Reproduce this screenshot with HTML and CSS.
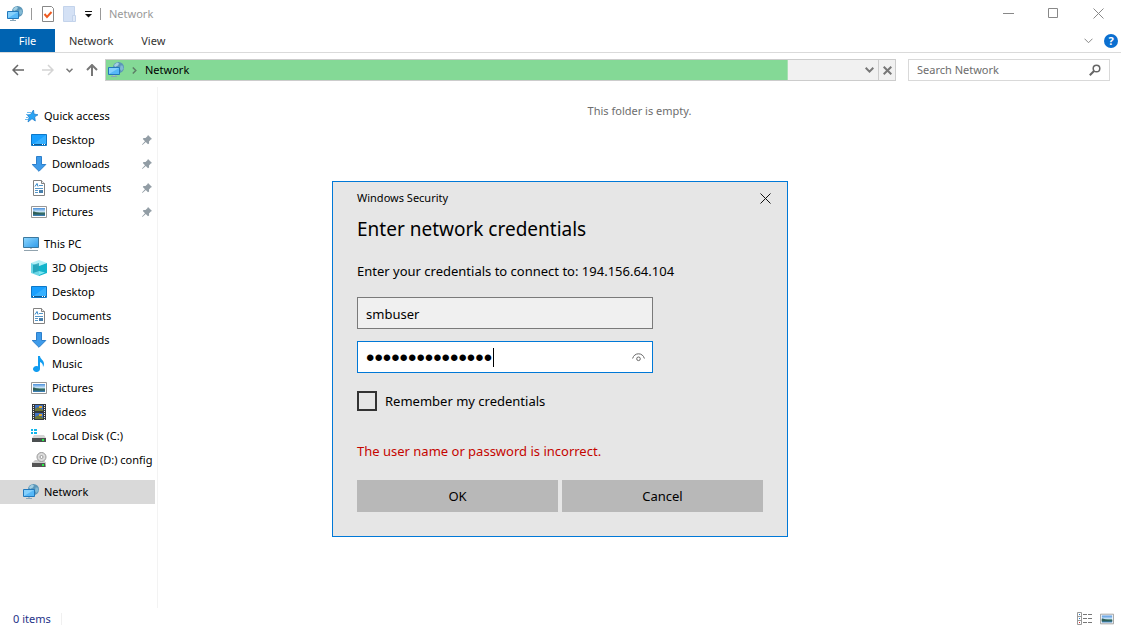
FILE: index.html
```html
<!DOCTYPE html>
<html lang="en">
<head>
    <meta charset="UTF-8">
    <meta name="viewport" content="width=device-width, initial-scale=1.0">
    <title>Network</title>
    <link rel="stylesheet" href="styles.css">
</head>
<body>

    <!-- Shared icons -->
    <svg class="icon-defs" aria-hidden="true">
        <defs>
            <linearGradient id="screenFill" x1="0" y1="0" x2="1" y2="1">
                <stop offset="0" stop-color="#8fd8ff"/>
                <stop offset="1" stop-color="#2f9bea"/>
            </linearGradient>
            <linearGradient id="skyFill" x1="0" y1="0" x2="0" y2="1">
                <stop offset="0" stop-color="#4a90dc"/>
                <stop offset="0.5" stop-color="#d4eafa"/>
                <stop offset="0.6" stop-color="#3c7868"/>
                <stop offset="1" stop-color="#3b7fc0"/>
            </linearGradient>
            <linearGradient id="driveFill" x1="0" y1="0" x2="0" y2="1">
                <stop offset="0" stop-color="#d4d4d4"/>
                <stop offset="1" stop-color="#8e8e8e"/>
            </linearGradient>
        </defs>
        <symbol id="i-network" viewBox="0 0 16 16">
            <circle cx="10.500" cy="5.500" r="5.500" fill="#5b96b8"/>
            <path d="M6 3l3-2.500 2 1-1 2L7 5z" fill="#a3cfe2"/>
            <path d="M12.500 3.500l2 0 1 3-2 2.500-1.500-2z" fill="#82b9d4"/>
            <path d="M.5 5.500h11v7H.500z" fill="#56b8f8" stroke="#2278bb"/>
            <path d="M1 6h10L1 12z" fill="#85d0fc"/>
            <path d="M5 13h2v1H5z" fill="#a9bac5"/>
            <path d="M3 14.500h6" stroke="#8aa7b9"/>
        </symbol>
        <symbol id="i-star" viewBox="0 0 16 16">
            <path d="M10.500 2l.5 4 4 .8-3.300 2 .6 4.200-3.300-2.300L5 14l1-4.500L4.500 7l3-.5z" fill="#2aa4f4" stroke="#1878c8" stroke-width=".7"/>
            <path d="M4 4.500h4M3 6.500h3M3 9.500h2M2 11.500h3" stroke="#6bb9ee"/>
        </symbol>
        <symbol id="i-desktop" viewBox="0 0 16 16">
            <path d="M.5 2.500h15v11H.500z" fill="#19a0ff" stroke="#0d78c8"/>
            <path d="M1 13L15 3v10z" fill="#36b0ff"/>
            <path d="M1 12.500h14" stroke="#10588f"/>
            <path d="M2 12.500h1M11 12.500h1M13 12.500h1" stroke="#fff"/>
        </symbol>
        <symbol id="i-download" viewBox="0 0 16 16">
            <path d="M5.500.5h5v8h4.300L8 15.300 1.200 8.500h4.300z" fill="#3e9bea" stroke="#2d7fcb"/>
        </symbol>
        <symbol id="i-document" viewBox="0 0 16 16">
            <path d="M2.500.5h8l3 3v12h-11z" fill="#fff" stroke="#828282"/>
            <path d="M10.500.5v3h3" fill="#eee" stroke="#828282"/>
            <path d="M4 6.500l2-3 1 3" fill="none" stroke="#2a82c6"/>
            <path d="M8 5.500h4M4 8.500h8M4 10.500h3M4 12.500h3" stroke="#5697c8"/>
            <path d="M8 10h4v3H8z" fill="#477fac"/>
        </symbol>
        <symbol id="i-picture" viewBox="0 0 16 16">
            <path d="M.5 2.500h15v11H.500z" fill="#fff" stroke="#979797"/>
            <path d="M2 4h12v8H2z" fill="url(#skyFill)"/>
            <path d="M2 7.500c3 0 4 2 12 2v1H2z" fill="#305f58"/>
        </symbol>
        <symbol id="i-pc" viewBox="0 0 16 16">
            <path d="M.5 1.500h15v10H.500z" fill="url(#screenFill)" stroke="#3c789e"/>
            <path d="M7 12h2v1H7z" fill="#b8c4cc"/>
            <path d="M1 14.500h14" stroke="#91a3ae"/>
        </symbol>
        <symbol id="i-cube" viewBox="0 0 16 16">
            <path d="M0 3l8-3 8 3-8 3z" fill="#b4f1f7"/>
            <path d="M0 3l8 3v10l-8-3z" fill="#6ad6e6"/>
            <path d="M16 3L8 6v10l8-3z" fill="#12b4cc"/>
            <path d="M2 5l6-2v8l-6 2z" fill="#0a93ab" opacity=".7"/>
            <path d="M8 11l6 1.500-6 2.500z" fill="#7fe6f2"/>
        </symbol>
        <symbol id="i-music" viewBox="0 0 16 16">
            <path d="M7 0h2c0 3 4 4 4 8 0 1-.4 2-1 3 0-3-1-4-3-5v7a3.500 3 0 1 1-2-2.700z" fill="#119cf0"/>
        </symbol>
        <symbol id="i-video" viewBox="0 0 16 16">
            <path d="M1 0h14v16H1z" fill="#34383c"/>
            <path d="M4 1h8v6H4zM4 9h8v6H4z" fill="#3f71c4"/>
            <path d="M4 5l3-2 5 3v1H4zM4 13l4-2 4 3v1H4z" fill="#6b7637"/>
            <path d="M8 2h3v2H8zM8 10h3v2H8z" fill="#e3a92d"/>
            <path d="M2.500 1v15M13.500 1v15" stroke="#eee" stroke-dasharray="1 1"/>
        </symbol>
        <symbol id="i-disk" viewBox="0 0 16 16">
            <path d="M0 1h2v2H0zM3 1h3v2H3zM0 4h2v2H0zM3 4h3v2H3z" fill="#12b6ea"/>
            <path d="M3 7h10l2 3H1z" fill="#d5d5d5"/>
            <path d="M1 10h14v4H1z" fill="#4b4f50"/>
            <path d="M11 11h2v2h-2z" fill="#28ee45"/>
        </symbol>
        <symbol id="i-cd" viewBox="0 0 16 16">
            <path d="M4 8h9l2 3H1z" fill="#c9c9c9"/>
            <circle cx="10.500" cy="5" r="4.500" fill="#dcdcdc" stroke="#999"/>
            <circle cx="10.500" cy="5" r="1.500" fill="#fff" stroke="#999"/>
            <path d="M1 10h14v5H1z" fill="url(#driveFill)"/>
            <path d="M1 11h13v4H1z" fill="#555"/>
            <path d="M11 12h2v2h-2z" fill="#28ee45"/>
        </symbol>
        <symbol id="i-pin" viewBox="0 0 10 10">
            <path d="M6 0l4 4-1.200.6-1.800 1.900.1 2-1.100.7L3.800 7 .4 9.900 0 9.500 3 6.200.8 4l.7-1.100 2 .1L5.400 1.200z" fill="#929da5"/>
        </symbol>
        <symbol id="i-details" viewBox="0 0 16 14">
            <path d="M.5.500h4v12h-4zM.5 4.500h4M.5 8.500h4" fill="#fff" stroke="#999"/>
            <path d="M2 2h1v1H2zM2 6h1v1H2z" fill="#2c7fc7"/>
            <path d="M2 10h1v1H2z" fill="#d22"/>
            <path d="M6 2.500h4M11 2.500h4M6 6.500h4M11 6.500h4M6 10.500h4M11 10.500h4" stroke="#777"/>
        </symbol>
    </svg>

    <div class="window">

        <!-- Title Bar -->
        <header class="title-bar">
            <svg class="icon"><use href="#i-network"/></svg>
            <span class="divider"></span>
            <div class="quick-tools">
                <button aria-label="Properties">
                    <svg width="12" height="16" viewBox="0 0 12 16"><path d="M.5.500h9l2 2v13H.500z" fill="#fff" stroke="#888"/><path d="M2.500 8l2.500 3 4.500-5" fill="none" stroke="#ee5a20" stroke-width="2"/></svg>
                </button>
                <button aria-label="New folder">
                    <svg width="13" height="16" viewBox="0 0 13 16"><path d="M.5.500h11v15H.500z" fill="#d4e1f5" stroke="#c3d3eb"/><path d="M9.500 9.500h3v6h-3z" fill="#dfe9f8" stroke="#c3d3eb"/></svg>
                </button>
                <button aria-label="Customize toolbar">
                    <svg width="7" height="8" viewBox="0 0 7 8"><path d="M0 1.500h7" stroke="#111"/><path d="M0 4h7L3.500 7.500z" fill="#111"/></svg>
                </button>
            </div>
            <span class="divider"></span>
            <h1 class="window-title">Network</h1>
            <div class="window-controls">
                <button aria-label="Minimize"><svg width="11" height="11" viewBox="0 0 11 11"><path d="M0 5.500h11" stroke="#888"/></svg></button>
                <button aria-label="Maximize"><svg width="11" height="11" viewBox="0 0 11 11"><path d="M.5.500h9v9h-9z" fill="none" stroke="#888"/></svg></button>
                <button aria-label="Close"><svg width="11" height="11" viewBox="0 0 11 11"><path d="M.5.500l10 10M10.500.5l-10 10" stroke="#888"/></svg></button>
            </div>
        </header>

        <!-- Ribbon Tabs -->
        <nav class="ribbon">
            <button class="tab tab-file">File</button>
            <button class="tab">Network</button>
            <button class="tab">View</button>
            <div class="ribbon-end">
                <button aria-label="Expand the ribbon"><svg width="9" height="6" viewBox="0 0 9 6"><path d="M.5.700l4 4 4-4" fill="none" stroke="#888"/></svg></button>
                <button class="help" aria-label="Help">?</button>
            </div>
        </nav>

        <!-- Address Row -->
        <div class="address-row">
            <div class="history">
                <button aria-label="Back"><svg width="12" height="12" viewBox="0 0 12 12"><path d="M12 6H1M6 1L1 6l5 5" fill="none" stroke="#666" stroke-width="1.500"/></svg></button>
                <button class="forward" aria-label="Forward"><svg width="12" height="12" viewBox="0 0 12 12"><path d="M0 6h11M6 1l5 5-5 5" fill="none" stroke="#d4d4d4" stroke-width="1.500"/></svg></button>
                <button aria-label="Recent locations"><svg width="7" height="5" viewBox="0 0 7 5"><path d="M.5.800l3 3 3-3" fill="none" stroke="#777" stroke-width="1.500"/></svg></button>
                <button aria-label="Up"><svg width="12" height="12" viewBox="0 0 12 12"><path d="M6 12V1M1 6l5-5 5 5" fill="none" stroke="#777" stroke-width="2"/></svg></button>
            </div>
            <div class="address">
                <div class="crumbs">
                    <svg class="icon"><use href="#i-network"/></svg>
                    <svg width="5" height="7" viewBox="0 0 5 7"><path d="M.8.500l3 3-3 3" fill="none" stroke="#5d8067" stroke-width="1.500"/></svg>
                    <a href="#">Network</a>
                </div>
                <button class="address-drop" aria-label="Previous locations"><svg width="9" height="6" viewBox="0 0 9 6"><path d="M.7.800l3.800 3.800L8.300.8" fill="none" stroke="#777" stroke-width="2"/></svg></button>
                <button class="address-stop" aria-label="Stop loading"><svg width="9" height="9" viewBox="0 0 9 9"><path d="M.7.700l7.600 7.600M8.300.700L.7 8.300" stroke="#777" stroke-width="2"/></svg></button>
            </div>
            <div class="search">
                <input type="text" placeholder="Search Network" aria-label="Search Network">
                <svg width="12" height="12" viewBox="0 0 12 12"><circle cx="7.500" cy="4.500" r="3.300" fill="none" stroke="#666" stroke-width="1.500"/><path d="M5 7L.8 11.200" stroke="#666" stroke-width="2"/></svg>
            </div>
        </div>

        <div class="main">
            <!-- Navigation Pane -->
            <aside class="sidebar">
                <ul class="tree">
                    <li><a class="root" href="#"><svg class="icon"><use href="#i-star"/></svg><span>Quick access</span></a></li>
                    <li><a href="#"><svg class="icon"><use href="#i-desktop"/></svg><span>Desktop</span><svg class="pin"><use href="#i-pin"/></svg></a></li>
                    <li><a href="#"><svg class="icon"><use href="#i-download"/></svg><span>Downloads</span><svg class="pin"><use href="#i-pin"/></svg></a></li>
                    <li><a href="#"><svg class="icon"><use href="#i-document"/></svg><span>Documents</span><svg class="pin"><use href="#i-pin"/></svg></a></li>
                    <li><a href="#"><svg class="icon"><use href="#i-picture"/></svg><span>Pictures</span><svg class="pin"><use href="#i-pin"/></svg></a></li>
                </ul>
                <ul class="tree">
                    <li><a class="root" href="#"><svg class="icon"><use href="#i-pc"/></svg><span>This PC</span></a></li>
                    <li><a href="#"><svg class="icon"><use href="#i-cube"/></svg><span>3D Objects</span></a></li>
                    <li><a href="#"><svg class="icon"><use href="#i-desktop"/></svg><span>Desktop</span></a></li>
                    <li><a href="#"><svg class="icon"><use href="#i-document"/></svg><span>Documents</span></a></li>
                    <li><a href="#"><svg class="icon"><use href="#i-download"/></svg><span>Downloads</span></a></li>
                    <li><a href="#"><svg class="icon"><use href="#i-music"/></svg><span>Music</span></a></li>
                    <li><a href="#"><svg class="icon"><use href="#i-picture"/></svg><span>Pictures</span></a></li>
                    <li><a href="#"><svg class="icon"><use href="#i-video"/></svg><span>Videos</span></a></li>
                    <li><a href="#"><svg class="icon"><use href="#i-disk"/></svg><span>Local Disk (C:)</span></a></li>
                    <li><a href="#"><svg class="icon"><use href="#i-cd"/></svg><span>CD Drive (D:) config</span></a></li>
                </ul>
                <ul class="tree">
                    <li><a class="root selected" href="#"><svg class="icon"><use href="#i-network"/></svg><span>Network</span></a></li>
                </ul>
            </aside>

            <main class="content">
                <p class="empty">This folder is empty.</p>
            </main>
        </div>

        <!-- Status Bar -->
        <footer class="status-bar">
            <span class="status-count">0 items</span>
            <div class="view-buttons">
                <button aria-label="Details view"><svg width="16" height="14"><use href="#i-details"/></svg></button>
                <button aria-label="Large icons view"><svg width="14" height="14"><use href="#i-picture"/></svg></button>
            </div>
        </footer>
    </div>

    <!-- Credentials Dialog -->
    <form class="dialog" role="dialog" aria-labelledby="dialogTitle">
        <div class="dialog-bar">
            <span>Windows Security</span>
            <button type="button" aria-label="Close"><svg width="11" height="11" viewBox="0 0 11 11"><path d="M.5.500l10 10M10.500.5l-10 10" stroke="#111"/></svg></button>
        </div>
        <h2 id="dialogTitle">Enter network credentials</h2>
        <p class="dialog-text">Enter your credentials to connect to: 194.156.64.104</p>

        <input class="field" type="text" name="username" value="smbuser" aria-label="User name">
        <div class="password">
            <input class="field" type="password" name="password" value="aaaaaaaaaaaaaaa" aria-label="Password">
            <span class="caret"></span>
            <button class="reveal" type="button" aria-label="Show password"><svg width="13" height="9" viewBox="0 0 13 9"><path d="M.6 5.500C1.500 2.600 3.500.8 6.500.8s5 1.800 5.900 4.700" fill="none" stroke="#666"/><circle cx="6.500" cy="5.800" r="1.800" fill="none" stroke="#666"/></svg></button>
        </div>

        <label class="remember"><input type="checkbox" name="remember"> Remember my credentials</label>
        <p class="error-message">The user name or password is incorrect.</p>

        <div class="dialog-buttons">
            <button type="button">OK</button>
            <button type="button">Cancel</button>
        </div>
    </form>

</body>
</html>
```
FILE: styles.css
```css
/* Common Styles */
* {
    box-sizing: border-box;
}

body {
    margin: 0;
    font-family: 'Noto Sans', 'Open Sans', sans-serif;
    font-size: 11px;
    line-height: 16px;
    color: #000;
    background-color: #fff;
}

button {
    display: flex;
    align-items: center;
    justify-content: center;
    padding: 0;
    border: none;
    background: none;
    font: inherit;
    color: inherit;
}

input {
    font: inherit;
    color: inherit;
    outline: none;
}

a {
    color: inherit;
    text-decoration: none;
}

h1, h2, p, ul {
    margin: 0;
    padding: 0;
    font-weight: normal;
}

.icon-defs {
    position: absolute;
    width: 0;
    height: 0;
}

.icon {
    flex: none;
    width: 16px;
    height: 16px;
}

.window {
    display: flex;
    flex-direction: column;
    min-height: 100vh;
}

/* Title Bar */
.title-bar {
    display: flex;
    align-items: center;
    height: 29px;
    padding: 0 0 2px 7px;
    gap: 8px;
}

.divider {
    width: 1px;
    height: 12px;
    background-color: #999;
}

.quick-tools {
    display: flex;
    align-items: center;
    gap: 9px;
    padding-left: 2px;
}

.window-title {
    flex: 1;
    font-size: 11px;
    color: #999;
}

.window-controls {
    display: flex;
}

.window-controls button {
    width: 45px;
    height: 27px;
}

/* Ribbon */
.ribbon {
    display: flex;
    height: 24px;
    border-bottom: 1px solid #dadada;
    color: #333;
}

.tab {
    padding: 0 14px;
}

.tab-file {
    width: 55px;
    background-color: #0063b1;
    color: #fff;
}

.ribbon-end {
    display: flex;
    gap: 11px;
    margin-left: auto;
    padding-right: 3px;
    align-items: center;
}

.help {
    width: 14px;
    height: 14px;
    border-radius: 50%;
    background-color: #0b6fd0;
    color: #fff;
    font-weight: bold;
}

/* Address Row */
.address-row {
    display: flex;
    align-items: center;
    height: 34px;
    padding-right: 11px;
}

.history {
    display: flex;
    align-items: center;
    justify-content: space-between;
    width: 105px;
    padding: 0 7px 0 12px;
}

.forward {
    margin-left: 5px;
}

.address {
    display: flex;
    flex: 1;
    height: 22px;
    margin-right: 12px;
    border: 1px solid #ccc;
    background: linear-gradient(#84d996, #84d996) 0 0 / 86.4% 100% no-repeat #f1f1f1;
}

.crumbs {
    display: flex;
    flex: 1;
    align-items: center;
    gap: 8px;
    padding-left: 2px;
}

.address-drop, .address-stop {
    width: 17px;
}

.address-stop {
    border-left: 1px solid #ccc;
}

.search {
    display: flex;
    align-items: center;
    width: 202px;
    height: 22px;
    padding: 0 8px;
    border: 1px solid #d9d9d9;
}

.search input {
    flex: 1;
    min-width: 0;
    padding: 0;
    border: none;
}

.search input::placeholder {
    color: #6d6d6d;
}

/* Navigation Pane */
.main {
    display: flex;
    flex: 1;
}

.sidebar {
    display: flex;
    flex-direction: column;
    gap: 8px;
    width: 158px;
    padding: 17px 2px 0 0;
    border-right: 1px solid #f3f3f3;
}

.tree {
    list-style: none;
}

.tree a {
    display: flex;
    align-items: center;
    gap: 5px;
    height: 24px;
    padding-left: 31px;
    white-space: nowrap;
}

.tree .root {
    padding-left: 23px;
}

.tree .selected {
    background-color: #d9d9d9;
}

.pin {
    width: 10px;
    height: 10px;
    margin-left: auto;
    margin-right: 3px;
}

.content {
    flex: 1;
    padding: 16px 0;
}

.empty {
    text-align: center;
    color: #6d6d6d;
}

/* Status Bar */
.status-bar {
    display: flex;
    align-items: center;
    padding: 4px 7px 0 13px;
    line-height: 12px;
    color: #1e3287;
}

.status-count {
    padding-right: 10px;
    border-right: 1px solid #f0f0f0;
}

.view-buttons {
    display: flex;
    gap: 7px;
    margin-left: auto;
}

/* Credentials Dialog */
.dialog {
    position: absolute;
    top: 181px;
    left: 332px;
    display: flex;
    flex-direction: column;
    width: 456px;
    padding: 8px 24px 24px;
    border: 1px solid #0078d7;
    background-color: #e6e6e6;
    font-size: 13px;
    line-height: 20px;
}

.dialog-bar {
    display: flex;
    justify-content: space-between;
    font-size: 11px;
    line-height: 16px;
}

.dialog-bar button {
    width: 16px;
    height: 16px;
    margin-right: -10px;
}

.dialog h2 {
    margin-top: 9px;
    font-size: 19px;
    line-height: 28px;
}

.dialog-text {
    margin: 18px 0 16px;
}

.field {
    display: block;
    width: 296px;
    height: 32px;
    padding: 2px 8px 0;
    border: 1px solid #7a7a7a;
    background-color: #f0f0f0;
}

.password {
    position: relative;
    width: 296px;
    margin-top: 12px;
}

.password .field {
    padding-right: 32px;
    border-color: #0078d7;
    background-color: #fff;
    font-family: 'Liberation Sans', sans-serif;
    font-size: 24px;
}

.caret {
    position: absolute;
    top: 7px;
    left: 136px;
    width: 1px;
    height: 19px;
    background-color: #000;
}

.reveal {
    position: absolute;
    top: 1px;
    right: 1px;
    width: 28px;
    height: 30px;
}

.remember {
    display: flex;
    align-items: center;
    gap: 8px;
    margin-top: 18px;
}

.remember input {
    appearance: none;
    width: 20px;
    height: 20px;
    margin: 0;
    border: 2px solid #333;
}

.error-message {
    margin: 30px 0 19px;
    color: #c50500;
}

.dialog-buttons {
    display: flex;
    gap: 4px;
}

.dialog-buttons button {
    flex: 1;
    height: 32px;
    background-color: #b8b8b8;
}
```
